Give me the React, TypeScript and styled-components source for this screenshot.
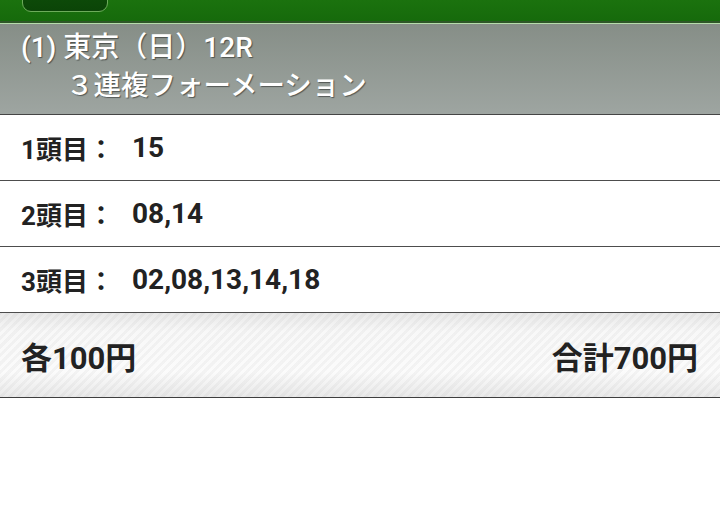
import React from "react";
import styled, { createGlobalStyle } from "styled-components";

const GlobalStyle = createGlobalStyle`
  html, body {
    margin: 0;
    padding: 0;
    background: #ffffff;
  }
  body {
    font-family: Roboto, "Noto Sans CJK JP", sans-serif;
    -webkit-font-smoothing: antialiased;
  }
`;

const Page = styled.div`
  width: 720px;
  min-height: 522px;
  background: #ffffff;
  display: flex;
  flex-direction: column;
`;

const TopBar = styled.div`
  height: 21px;
  flex: none;
  background: linear-gradient(#1b720e, #166a0b);
  border-bottom: 2px solid #2e5627;
  box-shadow: 0 1px 0 #b5dcaa;
  margin-bottom: 1px;
  display: flex;
  align-items: flex-start;
  padding-left: 22px;
  overflow: hidden;
`;

const BackButton = styled.div`
  width: 84px;
  height: 30px;
  margin-top: -20px;
  border: 1px solid #6cab5a;
  border-radius: 9px;
  background: linear-gradient(#0f520a, #0b4407);
`;

const RaceHeader = styled.div`
  height: 91px;
  flex: none;
  box-sizing: border-box;
  padding: 5px 0 0 21px;
  background: linear-gradient(#868e87, #9ea5a1);
  border-bottom: 1px solid #454545;
  color: #ffffff;
  text-shadow: 1px 1px 1px rgba(0, 0, 0, 0.45);
  display: flex;
  flex-direction: column;
`;

const RaceLine = styled.div<{ $indent?: number; $size?: number }>`
  font-family: Roboto, "Noto Sans CJK JP", sans-serif;
  font-size: ${(p) => p.$size ?? 28}px;
  line-height: 38px;
  font-weight: 500;
  padding-left: ${(p) => p.$indent ?? 0}px;
  white-space: nowrap;
`;

const PickRow = styled.div`
  height: 66px;
  flex: none;
  box-sizing: border-box;
  border-bottom: 1px solid #4d4d4d;
  display: flex;
  align-items: center;
  padding: 0 0 0 21px;
  color: #222222;
  font-family: Roboto, "Noto Sans CJK JP", sans-serif;
  font-weight: 700;
  font-size: 26px;
`;

const PickLabel = styled.span`
  width: 111px;
  flex: none;
  white-space: nowrap;
`;

const PickValue = styled.span`
  font-size: 28px;
  white-space: nowrap;
`;

const Summary = styled.div`
  height: 85px;
  flex: none;
  box-sizing: border-box;
  border-bottom: 1px solid #3f3f3f;
  padding: 0 22px 0 21px;
  display: flex;
  align-items: center;
  justify-content: space-between;
  color: #222222;
  font-family: Roboto, "Noto Sans CJK JP", sans-serif;
  font-weight: 700;
  font-size: 31px;
  background:
    repeating-linear-gradient(
      -45deg,
      rgba(0, 0, 0, 0) 0px,
      rgba(0, 0, 0, 0) 3px,
      rgba(0, 0, 0, 0.03) 3px,
      rgba(0, 0, 0, 0.03) 6px
    ),
    linear-gradient(#e8e8e8 0%, #f8f8f8 22%, #fbfbfb 70%, #e9e9e9 100%);
`;

const Amount = styled.span`
  white-space: nowrap;
`;

const picks = [
  { label: "1頭目：", value: "15" },
  { label: "2頭目：", value: "08,14" },
  { label: "3頭目：", value: "02,08,13,14,18" },
];

export default function App() {
  return (
    <Page>
      <GlobalStyle />
      <TopBar>
        <BackButton />
      </TopBar>
      <RaceHeader>
        <RaceLine>(1) 東京（日）12R</RaceLine>
        <RaceLine $indent={45} $size={27.5}>
          ３連複フォーメーション
        </RaceLine>
      </RaceHeader>
      {picks.map((p) => (
        <PickRow key={p.label}>
          <PickLabel>{p.label}</PickLabel>
          <PickValue>{p.value}</PickValue>
        </PickRow>
      ))}
      <Summary>
        <Amount>各100円</Amount>
        <Amount>合計700円</Amount>
      </Summary>
    </Page>
  );
}
